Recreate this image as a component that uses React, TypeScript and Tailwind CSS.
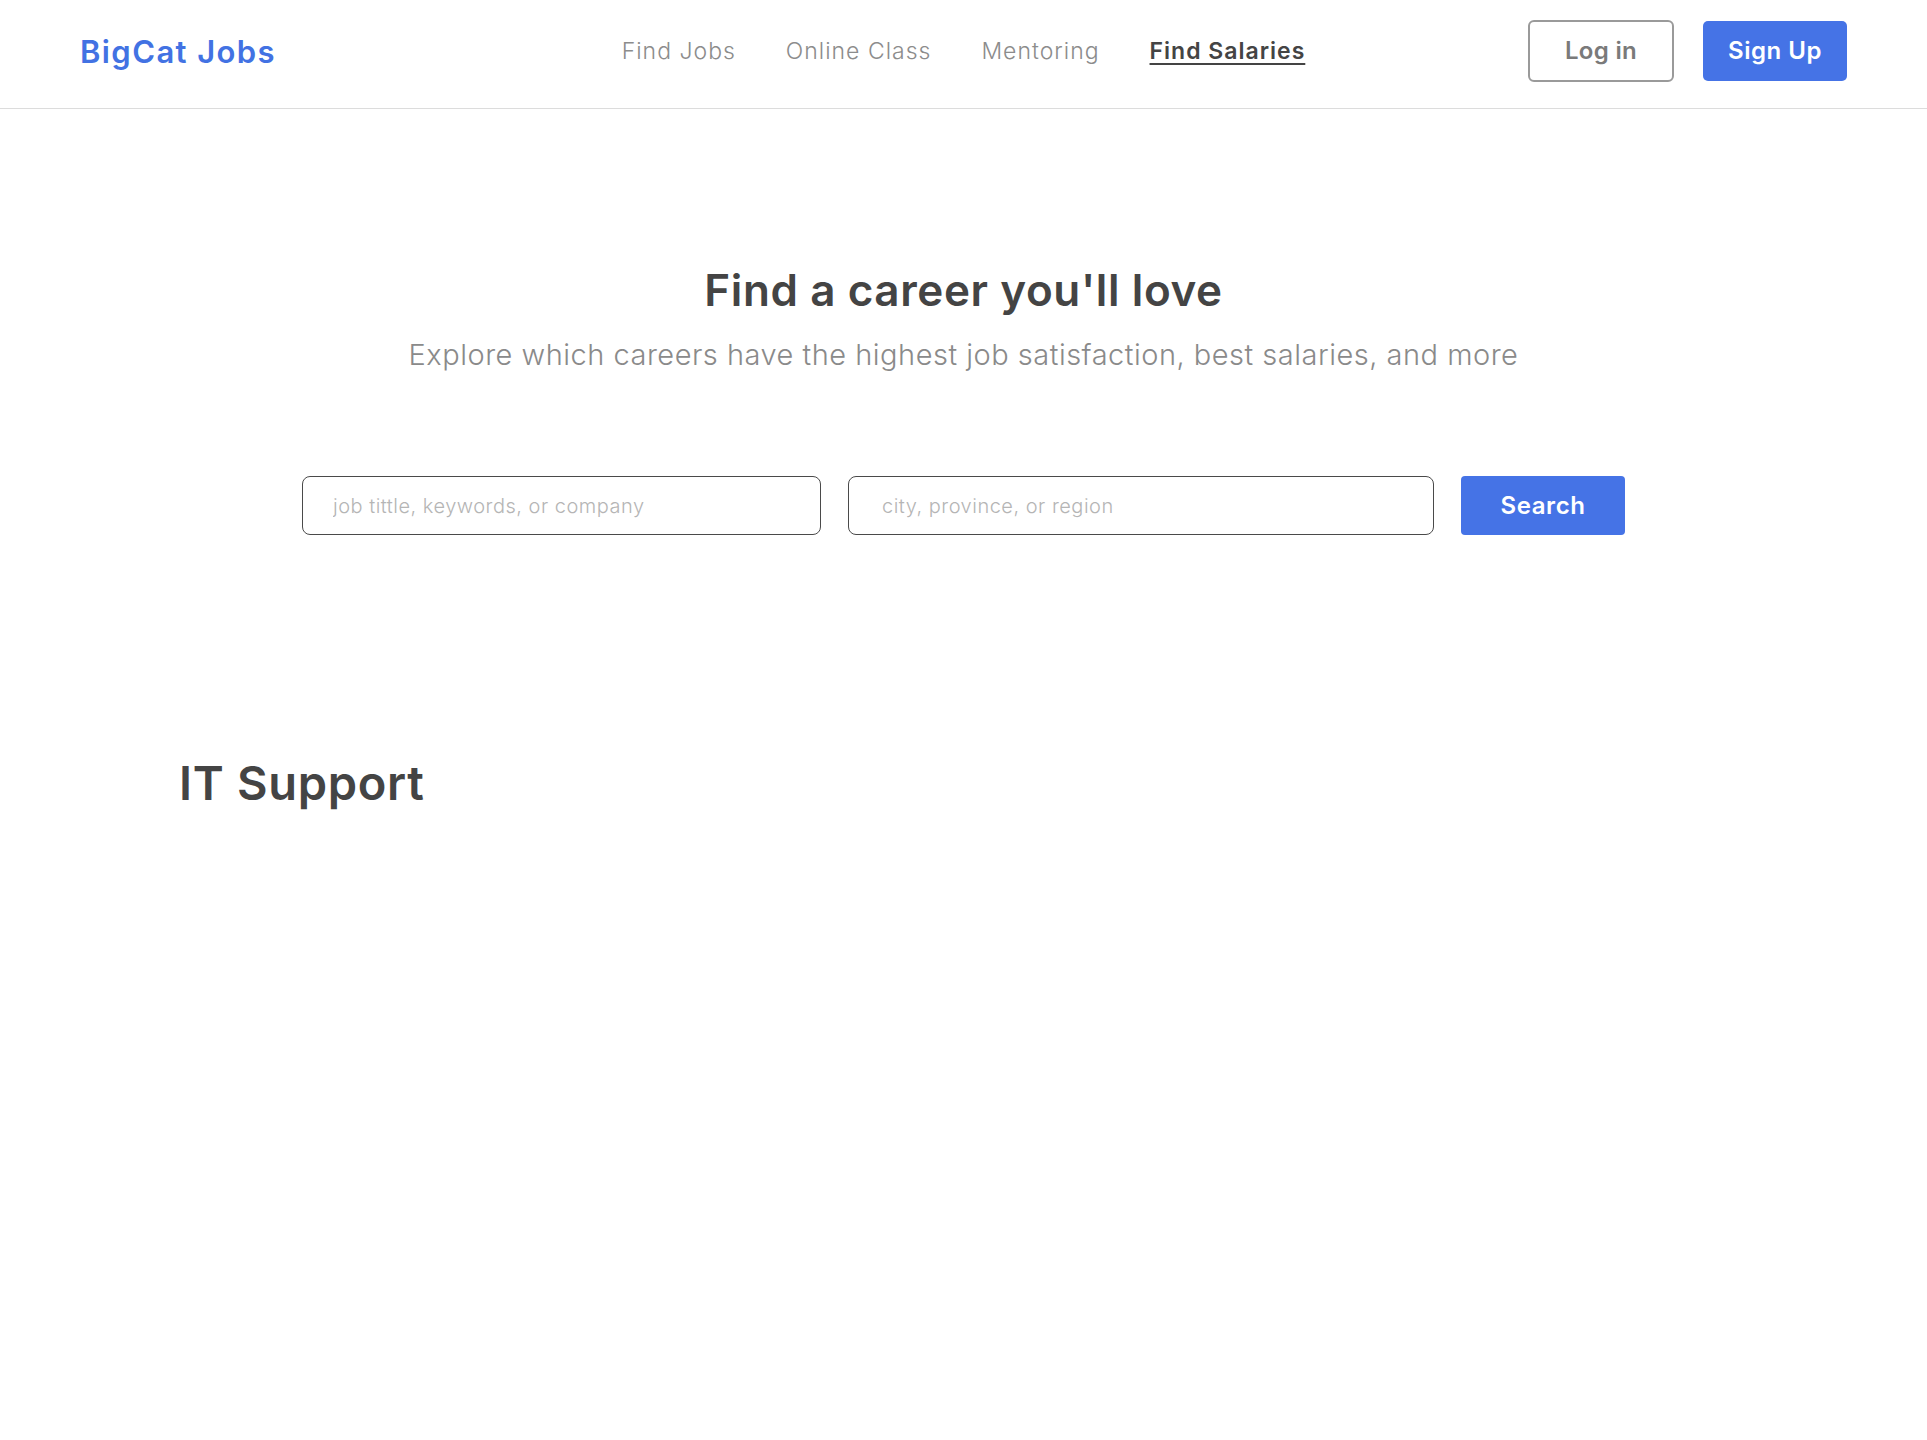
export default function App() {
  const font = { fontFamily: 'Inter, "Noto Sans", sans-serif' };
  return (
    <div className="min-h-screen bg-white text-[#444]" style={font}>
      {/* Header */}
      <header className="h-[109px] border-b border-[#dcdcdc] px-20 grid grid-cols-[1fr_auto_1fr] items-center">
        <a href="#" className="justify-self-start text-[31px] font-semibold text-[#4272e3] tracking-[1.4px] -mt-[4px]">
          BigCat Jobs
        </a>
        <nav className="flex items-center gap-[50px] text-[23px] tracking-[1px] text-[#8c8c8c] font-light -mt-[6px]">
          <a href="#">Find Jobs</a>
          <a href="#">Online Class</a>
          <a href="#">Mentoring</a>
          <a href="#" className="font-semibold text-[#444] underline underline-offset-4">
            Find Salaries
          </a>
        </nav>
        <div className="justify-self-end flex items-center gap-[29px] -mt-[6px]">
          <button className="w-[146px] h-[62px] rounded-[6px] border-2 border-[#9a9a9a] text-[24px] tracking-[0.3px] font-semibold text-[#7a7a7a]">
            Log in
          </button>
          <button className="w-[144px] h-[60px] rounded-[5px] bg-[#4573e6] text-[24px] tracking-[0.5px] font-semibold text-white">
            Sign Up
          </button>
        </div>
      </header>

      {/* Hero */}
      <section className="pt-[153px] flex flex-col items-center">
        <h1 className="text-[44px] leading-[56px] tracking-[0.6px] font-semibold text-[#444]">Find a career you'll love</h1>
        <p className="mt-[19px] text-[29px] leading-[36px] tracking-[0.5px] font-light text-[#8a8a8a]">
          Explore which careers have the highest job satisfaction, best salaries, and more
        </p>
        <form className="mt-[103px] flex items-center gap-[27px]" onSubmit={(e) => e.preventDefault()}>
          <input
            type="text"
            placeholder="job tittle, keywords, or company"
            className="w-[519px] h-[59px] rounded-[8px] border border-[#4a4a4a] pl-[30px] text-[20px] tracking-[0.5px] font-light placeholder:text-[#b5b5b5] outline-none"
          />
          <input
            type="text"
            placeholder="city, province, or region"
            className="w-[586px] h-[59px] rounded-[8px] border border-[#4a4a4a] pl-[33px] text-[20px] tracking-[0.5px] font-light placeholder:text-[#b5b5b5] outline-none"
          />
          <button className="w-[164px] h-[59px] rounded-[4px] bg-[#4573e6] text-[24px] tracking-[0.6px] font-semibold text-white">
            Search
          </button>
        </form>
      </section>

      {/* Category */}
      <section className="mt-[220px] pl-[179px]">
        <h2 className="text-[47px] leading-[56px] tracking-[0.7px] font-semibold text-[#444]">IT Support</h2>
      </section>
    </div>
  );
}
